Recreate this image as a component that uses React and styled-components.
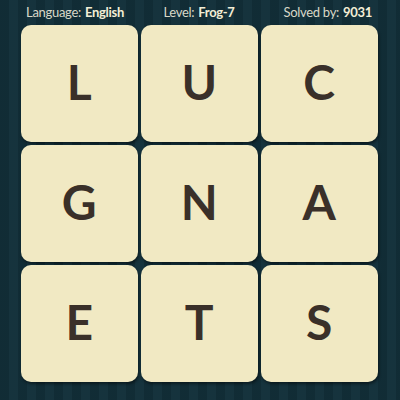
import styled, { createGlobalStyle } from "styled-components";

const GlobalStyle = createGlobalStyle`
  html, body {
    margin: 0;
    padding: 0;
  }
  body {
    width: 400px;
    height: 400px;
    overflow: hidden;
  }
`;

const letters = ["L", "U", "C", "G", "N", "A", "E", "T", "S"];

const stats = [
  { label: "Language:", value: "English", align: "start" },
  { label: "Level:", value: "Frog-7", align: "center" },
  { label: "Solved by:", value: "9031", align: "end" },
];

export default function App() {
  return (
    <>
      <GlobalStyle />
      <Board>
        <InfoBar>
          {stats.map((s) => (
            <Stat key={s.label} $align={s.align}>
              {s.label} <strong>{s.value}</strong>
            </Stat>
          ))}
        </InfoBar>
        <Grid>
          {letters.map((l, i) => (
            <Tile key={i}>{l}</Tile>
          ))}
        </Grid>
      </Board>
    </>
  );
}

const Board = styled.div`
  width: 400px;
  height: 400px;
  box-sizing: border-box;
  background-color: #12303a;
  background-image: repeating-linear-gradient(
    90deg,
    rgba(0, 0, 0, 0.08) 0px,
    rgba(0, 0, 0, 0.08) 9px,
    rgba(255, 255, 255, 0.015) 9px,
    rgba(255, 255, 255, 0.015) 18px
  );
  display: flex;
  flex-direction: column;
  padding: 0 21px 0 21px;
  font-family: Lato, "Open Sans", sans-serif;
`;

const InfoBar = styled.div`
  height: 25px;
  display: grid;
  grid-template-columns: 1fr auto 1fr;
  align-items: center;
  padding: 0 7px 2px 5px;
  box-sizing: border-box;
`;

const Stat = styled.span`
  justify-self: ${(p) => p.$align};
  color: #d9d8c8;
  font-size: 13px;
  letter-spacing: -0.3px;
  white-space: nowrap;
  strong {
    color: #f3eed6;
    font-weight: 700;
    margin-left: 1px;
  }
`;

const Grid = styled.div`
  display: grid;
  grid-template-columns: repeat(3, 116.5px);
  grid-template-rows: repeat(3, 116.5px);
  gap: 3.5px;
`;

const Tile = styled.div`
  background: #f1e9c3;
  border-radius: 10px;
  box-shadow: 1px 2px 3px rgba(0, 0, 0, 0.45);
  display: flex;
  align-items: center;
  justify-content: center;
  color: #3a3029;
  font-family: Lato, "Open Sans", sans-serif;
  font-weight: 700;
  font-size: 48px;
  line-height: 1;
  padding-bottom: 2px;
  box-sizing: border-box;
`;
